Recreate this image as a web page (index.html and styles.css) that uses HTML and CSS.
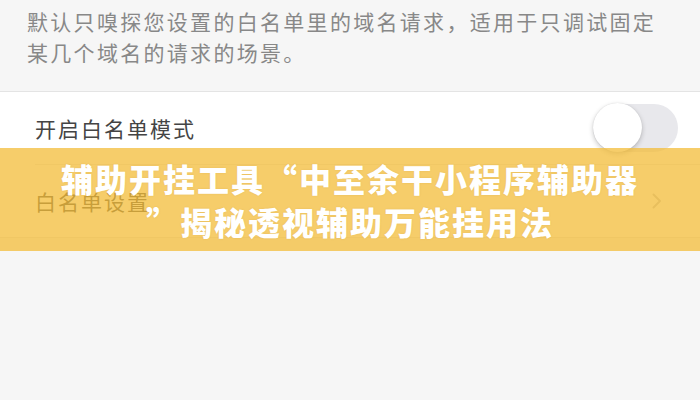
FILE: index.html
```html
<!DOCTYPE html>
<html lang="zh-CN">
<head>
    <meta charset="UTF-8">
    <meta name="viewport" content="width=device-width, initial-scale=1.0">
    <title>白名单设置</title>
    <link rel="stylesheet" href="styles.css">
</head>
<body>

    <!-- Description -->
    <p class="hint">默认只嗅探您设置的白名单里的域名请求，适用于只调试固定某几个域名的请求的场景。</p>

    <!-- Settings group -->
    <ul class="group">
        <li class="row">
            <span class="row-title">开启白名单模式</span>
            <span class="switch"><span class="knob"></span></span>
        </li>
        <li class="row">
            <span class="row-title">白名单设置</span>
            <svg class="chevron" width="10" height="16" viewBox="0 0 10 16">
                <polyline points="1.5,1.5 8,8 1.5,14.5" fill="none" stroke="#c7c7cc" stroke-width="2" stroke-linecap="round" stroke-linejoin="round"/>
            </svg>
        </li>
    </ul>

    <!-- Title banner -->
    <div class="banner">
        <h1>辅助开挂工具“中至余干小程序辅助器<br>”揭秘透视辅助万能挂用法</h1>
    </div>

</body>
</html>
```

FILE: styles.css
```css
body {
    font-family: "Noto Sans CJK SC", "Noto Sans", sans-serif;
    background: #f6f6f6;
    color: #333;
    margin: 0;
    padding: 0;
    position: relative;
    min-height: 400px;
}

.hint {
    margin: 0;
    padding: 6px 40px 23px 27px;
    font-size: 21px;
    line-height: 31px;
    letter-spacing: 2.3px;
    color: #888;
}

.group {
    list-style: none;
    margin: 0;
    padding: 0;
    background: #fff;
    border-top: 1px solid #e4e4e4;
    border-bottom: 1px solid #e6e6e6;
}

.row {
    display: flex;
    align-items: center;
    justify-content: space-between;
    height: 72px;
    margin-left: 35px;
    padding-right: 22px;
    border-bottom: 1px solid #ececec;
}

.row:last-child {
    border-bottom: none;
}

.row-title {
    font-size: 21px;
    letter-spacing: 2px;
    color: #444;
}

/* iOS style switch, off state */
.switch {
    position: relative;
    width: 85px;
    height: 48px;
    border-radius: 24px;
    background: #e8e8ec;
}

.knob {
    position: absolute;
    left: 0;
    top: -1px;
    width: 49px;
    height: 49px;
    border-radius: 50%;
    background: #fff;
    box-shadow: 0 2px 5px rgba(0, 0, 0, 0.22), 0 0 1px rgba(0, 0, 0, 0.15);
}

.chevron {
    margin-right: 16px;
}

.banner {
    position: absolute;
    top: 148px;
    left: 0;
    right: 0;
    height: 103px;
    background: rgba(243, 188, 56, 0.75);
    display: flex;
    align-items: center;
    justify-content: center;
}

.banner h1 {
    margin: 0;
    font-size: 32px;
    font-weight: 900;
    line-height: 43px;
    letter-spacing: 2px;
    color: #fff;
    text-align: center;
    text-shadow: 0 0 2px rgba(150, 100, 0, 0.15);
}
```
